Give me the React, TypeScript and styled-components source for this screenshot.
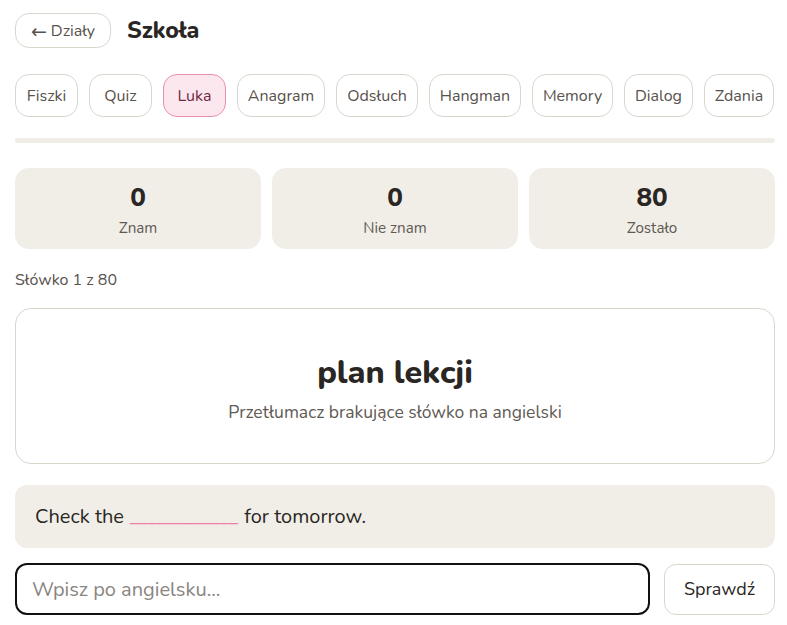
import React from "react";
import styled, { createGlobalStyle } from "styled-components";

const Global = createGlobalStyle`
  * { box-sizing: border-box; }
  body {
    margin: 0;
    background: #ffffff;
    font-family: "Nunito", "Open Sans", "Noto Sans", sans-serif;
    color: #2a2623;
  }
`;

const Page = styled.div`
  padding: 13px 12px 0 15px;
  display: flex;
  flex-direction: column;
`;

const Header = styled.div`
  display: flex;
  align-items: center;
  gap: 16px;
  height: 35px;
`;

const BackButton = styled.button`
  height: 35px;
  width: 96px;
  border: 1px solid #d9d6ce;
  border-radius: 14px;
  background: #fff;
  color: #57524c;
  font-family: inherit;
  font-size: 16px;
  padding: 0;
  display: flex;
  align-items: center;
  justify-content: center;
`;

const Arrow = styled.span`
  font-family: "DejaVu Sans", sans-serif;
  font-size: 19px;
  line-height: 1;
  margin-right: 4px;
  margin-top: 1px;
`;

const Title = styled.h1`
  margin: 0;
  font-size: 23px;
  font-weight: 800;
  color: #2a2623;
`;

const Tabs = styled.div`
  display: flex;
  gap: 11px;
  margin-top: 26px;
`;

const Tab = styled.button<{ $active?: boolean; $w: number }>`
  height: 43px;
  width: ${(p) => p.$w}px;
  border-radius: 14px;
  border: 1px solid ${(p) => (p.$active ? "#e98fae" : "#d9d6ce")};
  background: ${(p) => (p.$active ? "#fce7ee" : "#fff")};
  color: ${(p) => (p.$active ? "#6e2944" : "#57524c")};
  font-family: inherit;
  font-size: 16px;
  padding: 0;
`;

const Progress = styled.div`
  height: 5px;
  border-radius: 3px;
  background: #f0ede6;
  margin-top: 21px;
`;

const Stats = styled.div`
  display: grid;
  grid-template-columns: 1fr 1fr 1fr;
  gap: 11px;
  margin-top: 25px;
`;

const StatCard = styled.div`
  height: 81px;
  border-radius: 14px;
  background: #f1eee8;
  display: flex;
  flex-direction: column;
  align-items: center;
  justify-content: center;
`;

const StatNum = styled.div`
  font-size: 26px;
  font-weight: 800;
  line-height: 38px;
  color: #2a2623;
`;

const StatLabel = styled.div`
  font-size: 15.2px;
  color: #5f5a54;
  line-height: 22px;
`;

const Counter = styled.div`
  font-size: 16px;
  color: #57524c;
  margin-top: 21px;
  line-height: 20px;
`;

const WordCard = styled.div`
  margin-top: 18px;
  height: 156px;
  border: 1px solid #d9d6ce;
  border-radius: 16px;
  display: flex;
  flex-direction: column;
  align-items: center;
  justify-content: center;
  padding-top: 2px;
`;

const Word = styled.div`
  font-size: 32.3px;
  font-weight: 800;
  line-height: 42px;
  color: #2a2623;
`;

const Hint = styled.div`
  font-size: 17.5px;
  line-height: 24px;
  color: #5f5a54;
  margin-top: 7px;
`;

const Sentence = styled.div`
  margin-top: 21px;
  height: 63px;
  border-radius: 12px;
  background: #f1eee8;
  display: flex;
  align-items: center;
  padding: 0 20px;
  font-size: 20px;
  color: #2a2623;
  white-space: pre;
`;

const Blank = styled.span`
  color: #ec7fa3;
  letter-spacing: -1px;
  margin-right: 2px;
`;

const AnswerRow = styled.div`
  display: flex;
  gap: 14px;
  margin-top: 15px;
  align-items: center;
`;

const Input = styled.input`
  flex: 1;
  height: 52px;
  border: 2px solid #111;
  border-radius: 12px;
  padding: 0 15px;
  font-family: inherit;
  font-size: 20px;
  color: #2a2623;
  outline: none;
  &::placeholder {
    color: #8a857f;
  }
`;

const CheckButton = styled.button`
  width: 111px;
  height: 51px;
  border: 1px solid #d9d6ce;
  border-radius: 12px;
  background: #fff;
  color: #2a2623;
  font-family: inherit;
  font-size: 18px;
  padding: 0;
`;

const tabs: [string, number][] = [
  ["Fiszki", 63],
  ["Quiz", 63],
  ["Luka", 63],
  ["Anagram", 88],
  ["Odsłuch", 82],
  ["Hangman", 92],
  ["Memory", 81],
  ["Dialog", 69],
  ["Zdania", 70],
];

const stats = [
  ["0", "Znam"],
  ["0", "Nie znam"],
  ["80", "Zostało"],
];

export default function App() {
  return (
    <>
      <Global />
      <Page>
        <Header>
          <BackButton>
            <Arrow>←</Arrow>Działy
          </BackButton>
          <Title>Szkoła</Title>
        </Header>
        <Tabs>
          {tabs.map(([t, w]) => (
            <Tab key={t} $w={w} $active={t === "Luka"}>
              {t}
            </Tab>
          ))}
        </Tabs>
        <Progress />
        <Stats>
          {stats.map(([n, l]) => (
            <StatCard key={l}>
              <StatNum>{n}</StatNum>
              <StatLabel>{l}</StatLabel>
            </StatCard>
          ))}
        </Stats>
        <Counter>Słówko 1 z 80</Counter>
        <WordCard>
          <Word>plan lekcji</Word>
          <Hint>Przetłumacz brakujące słówko na angielski</Hint>
        </WordCard>
        <Sentence>
          Check the <Blank>____________</Blank> for tomorrow.
        </Sentence>
        <AnswerRow>
          <Input placeholder="Wpisz po angielsku..." />
          <CheckButton>Sprawdź</CheckButton>
        </AnswerRow>
      </Page>
    </>
  );
}
